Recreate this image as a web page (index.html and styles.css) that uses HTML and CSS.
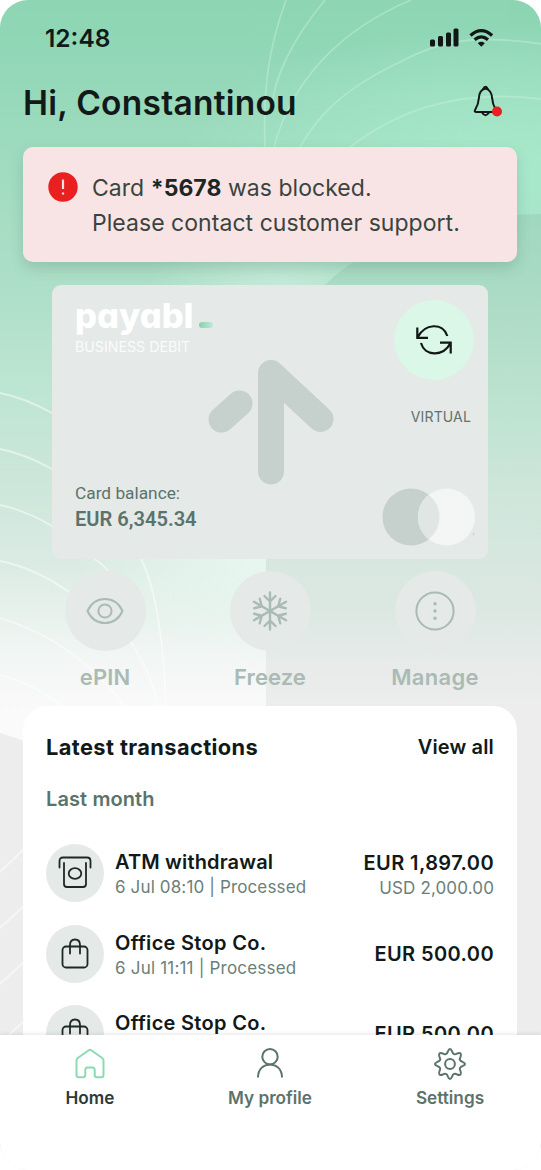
FILE: index.html
```html
<!DOCTYPE html>
<html lang="en">
<head>
<meta charset="utf-8">
<title>payabl. home</title>
<link rel="stylesheet" href="styles.css">
</head>
<body>
<div class="phone">
  <svg class="backdrop" viewBox="0 0 541 1170" preserveAspectRatio="none">
    <defs>
      <linearGradient id="base" x1="0" y1="0" x2="0" y2="1">
        <stop offset="0" stop-color="#8dd5b3"/>
        <stop offset=".04" stop-color="#90d7b6"/>
        <stop offset=".125" stop-color="#9edbbe"/>
        <stop offset=".25" stop-color="#aedfc8"/>
        <stop offset=".33" stop-color="#bde5d3"/>
        <stop offset=".42" stop-color="#cee7db"/>
        <stop offset=".48" stop-color="#daebe3"/>
        <stop offset=".56" stop-color="#f2f6f4"/>
        <stop offset=".61" stop-color="#fafafa"/>
      </linearGradient>
      <linearGradient id="right" gradientUnits="userSpaceOnUse" x1="0" y1="214" x2="0" y2="706">
        <stop offset="0" stop-color="#9fd8be"/>
        <stop offset=".2" stop-color="#aedcc7"/>
        <stop offset=".4" stop-color="#bee3d1"/>
        <stop offset=".55" stop-color="#cde6da"/>
        <stop offset=".7" stop-color="#d7e7df"/>
        <stop offset=".8" stop-color="#dbe8e2"/>
        <stop offset=".92" stop-color="#e8ebea"/>
        <stop offset="1" stop-color="#ecedec"/>
      </linearGradient>
      <radialGradient id="glow" gradientUnits="userSpaceOnUse" cx="0" cy="0" r="1" gradientTransform="translate(500 170) scale(330 145)">
        <stop offset="0" stop-color="#a9eacc" stop-opacity=".95"/>
        <stop offset=".4" stop-color="#a9eacc" stop-opacity=".6"/>
        <stop offset="1" stop-color="#a9eacc" stop-opacity="0"/>
      </radialGradient>
      <radialGradient id="mid" gradientUnits="userSpaceOnUse" cx="0" cy="0" r="1" gradientTransform="translate(266 560) scale(190 100)">
        <stop offset="0" stop-color="#e8f8f0"/>
        <stop offset="1" stop-color="#e8f8f0" stop-opacity="0"/>
      </radialGradient>
      <radialGradient id="halo" gradientUnits="userSpaceOnUse" cx="0" cy="0" r="1" gradientTransform="translate(280 285) scale(130 50)">
        <stop offset="0" stop-color="#c4ead9"/>
        <stop offset="1" stop-color="#c4ead9" stop-opacity="0"/>
      </radialGradient>
    </defs>
    <rect width="541" height="1170" fill="url(#base)"/>
    <rect width="541" height="400" fill="url(#glow)"/>
    <rect y="230" width="541" height="110" fill="url(#halo)"/>
    <rect y="400" width="267" height="260" fill="url(#mid)"/>
    <path d="M541 214C450 216 370 240 325 285C285 330 266 420 266 560V1170H541Z" fill="url(#right)"/>
    <path d="M0 733Q80 755 130 830V1170H0Z" fill="#ededed"/>
    <g class="rings-top">
      <path d="M286 0C268 50 263 90 265 147"/>
      <path d="M325 0C290 42 274 80 272 106"/>
      <path d="M411 0C340 30 292 80 274 147"/>
      <path d="M541 44C470 33 435 43 400 62C345 88 318 115 300 147"/>
      <path d="M541 99C450 88 392 115 350 147"/>
    </g>
    <g class="rings-side">
      <path d="M0 393Q25 398 52 413"/>
      <path d="M0 449Q25 454 52 469"/>
      <path d="M0 505Q25 510 52 526"/>
      <path d="M0 561Q35 568 69 592M124 632Q150 668 158 706"/>
      <path d="M0 618Q75 640 124 706"/>
      <path d="M0 675Q35 684 62 706"/>
      <path d="M94 559Q102 563 108 571M141 559Q162 600 166 706"/>
      <path d="M0 872L24 849M0 928L24 906M0 984L24 962M0 1043L24 1021"/>
    </g>
  </svg>

  <header class="status">
    <span class="clock">12:48</span>
    <svg class="signals" width="66" height="20" viewBox="0 0 66 20">
      <g fill="#111716">
        <rect x="1" y="11.500" width="5" height="7" rx="1.500"/>
        <rect x="9" y="8" width="5" height="10.500" rx="1.500"/>
        <rect x="17" y="4.500" width="5" height="14" rx="1.500"/>
        <rect x="24.500" y="0.500" width="5" height="18" rx="1.500"/>
        <path d="M52.300 18.700L48.800 15.200Q52.300 12.500 55.800 15.200Z"/>
      </g>
      <path d="M41.500 7.500Q52.300 -2.300 63.100 7.500M45.600 11.800Q52.300 5.800 59 11.800" fill="none" stroke="#111716" stroke-width="3.200"/>
    </svg>
  </header>

  <div class="greeting">
    <h1>Hi, Constantinou</h1>
    <svg class="bell" width="32" height="34" viewBox="0 0 32 34">
      <g fill="none" stroke="#111716" stroke-width="2" stroke-linejoin="round">
        <path d="M14.500 3.600C9.200 4.800 8 9 7.800 13.500C7.500 19 6.500 21 4.300 24.500Q2.800 26.800 5 27H24Q26.200 26.800 24.700 24.500C22.500 21 21.500 19 21.200 13.500C21 9 19.700 4.800 14.500 3.600Z"/>
        <path d="M12 4.500Q14.500 -1.200 17 4.500M11 27.500Q14.500 32.800 18 27.500"/>
      </g>
      <circle cx="26" cy="26.500" r="5" fill="#e8201f"/>
    </svg>
  </div>

  <section class="alert">
    <svg width="30" height="30" viewBox="0 0 30 30">
      <circle cx="15" cy="15" r="14.700" fill="#e8201f"/>
      <path d="M15 7.500V17M15 20.500V22.500" stroke="#ece3e3" stroke-width="2.200"/>
    </svg>
    <p>Card <b>*5678</b> was blocked.<br>Please contact customer support.</p>
  </section>

  <section class="card">
    <svg class="arrow" width="128" height="126" viewBox="0 0 128 126">
      <g fill="none" stroke="#c6d1cd" stroke-width="26" stroke-linecap="round" stroke-linejoin="round">
        <path d="M14.500 60.500L32.500 44.500M64 112.500V14L113.500 60"/>
      </g>
    </svg>
    <div class="card-row">
      <div>
        <div class="logo">payabl<i class="dash"></i></div>
        <div class="tier">BUSINESS DEBIT</div>
      </div>
      <div class="flip">
        <svg width="36" height="32" viewBox="0 0 36 32" fill="none" stroke="#111716" stroke-width="2.200">
          <path d="M1.300 3.500V13.800H12M1.500 13.500C9 -1 27 -1.500 31.300 12M34.700 29.500V18.700H24M34.500 19C27 33.500 8.500 32 5 19"/>
        </svg>
      </div>
    </div>
    <div class="virtual">VIRTUAL</div>
    <div class="card-row card-bottom">
      <div class="balance"><span>Card balance:</span><strong>EUR 6,345.34</strong></div>
      <svg class="network" width="94" height="58" viewBox="0 0 94 58">
        <circle cx="29" cy="29" r="28.500" fill="#c6d1cd"/>
        <circle cx="64.500" cy="29" r="28.500" fill="#f4f5f5"/>
        <path d="M46.700 6.700A28.500 28.500 0 0 1 46.700 51.300A28.500 28.500 0 0 1 46.700 6.700Z" fill="#e0e6e3"/>
        <circle cx="91.500" cy="46" r=".9" fill="#c6d1cd"/>
      </svg>
    </div>
  </section>

  <section class="actions">
    <div class="action">
      <div class="disc"><svg width="40" height="40" viewBox="0 0 40 40"><path d="M2.500 20Q8 8 20 8T37.500 20Q32 32 20 32T2.500 20Z"/><circle cx="20" cy="20" r="6.600"/></svg></div>
      <span>ePIN</span>
    </div>
    <div class="action">
      <div class="disc"><svg width="40" height="40" viewBox="0 0 40 40" class="flake">
        <g id="arm"><path d="M20 1.500V38.500M14.500 5L20 10.500L25.500 5M14.500 35L20 29.500L25.500 35"/></g>
        <use href="#arm" transform="rotate(60 20 20)"/><use href="#arm" transform="rotate(120 20 20)"/>
      </svg></div>
      <span>Freeze</span>
    </div>
    <div class="action">
      <div class="disc"><svg width="40" height="40" viewBox="0 0 40 40"><circle cx="20" cy="20" r="18.600"/><g class="dots"><circle cx="20" cy="12.800" r="1.700"/><circle cx="20" cy="20" r="1.700"/><circle cx="20" cy="27.200" r="1.700"/></g></svg></div>
      <span class="wide">Manage</span>
    </div>
  </section>

  <main class="sheet">
    <div class="sheet-head"><h2>Latest transactions</h2><a>View all</a></div>
    <h3>Last month</h3>
    <div class="tx">
      <div class="tx-icon"><svg width="34" height="34" viewBox="0 0 34 34"><path d="M1.500 11.500V5Q1.500 1.500 5 1.500H29Q32.500 1.500 32.500 5V11.500M6 7V28Q6 31 9 31H25Q28 31 28 28V7"/><ellipse cx="17" cy="17.500" rx="6.300" ry="5.300"/></svg></div>
      <div class="tx-info"><b>ATM withdrawal</b><span>6 Jul 08:10 | Processed</span></div>
      <div class="tx-sum"><b>EUR 1,897.00</b><span>USD 2,000.00</span></div>
    </div>
    <div class="tx">
      <div class="tx-icon"><svg width="34" height="34" viewBox="0 0 34 34"><rect x="4.500" y="9.500" width="25" height="21" rx="3.500"/><path d="M12 16.500V8Q12 2.500 17 2.500T22 8V16.500"/></svg></div>
      <div class="tx-info office"><b>Office Stop Co.</b><span>6 Jul 11:11 | Processed</span></div>
      <div class="tx-sum single"><b>EUR 500.00</b></div>
    </div>
    <div class="tx">
      <div class="tx-icon"><svg width="34" height="34" viewBox="0 0 34 34"><rect x="4.500" y="9.500" width="25" height="21" rx="3.500"/><path d="M12 16.500V8Q12 2.500 17 2.500T22 8V16.500"/></svg></div>
      <div class="tx-info office"><b>Office Stop Co.</b></div>
      <div class="tx-sum single"><b>EUR 500.00</b></div>
    </div>
  </main>

  <nav class="tabs">
    <a class="tab active"><svg width="34" height="34" viewBox="0 0 34 34"><path d="M3.500 13.500Q3.500 12 4.800 11L15.700 3.300Q17 2.300 18.300 3.300L29.200 11Q30.500 12 30.500 13.500V28Q30.500 30.300 28.200 30.300H24Q21.700 30.300 21.700 28V23Q21.700 20.500 19.500 20.500H14.500Q12.300 20.500 12.300 23V28Q12.300 30.300 10 30.300H5.800Q3.500 30.300 3.500 28Z"/></svg><span>Home</span></a>
    <a class="tab"><svg width="34" height="34" viewBox="0 0 34 34"><circle cx="17" cy="9.700" r="7.700"/><path d="M5 30.500C5 13 29 13 29 30.500"/></svg><span>My profile</span></a>
    <a class="tab"><svg width="34" height="34" viewBox="0 0 34 34"><circle cx="17" cy="17" r="4.900"/><path d="M14.800 4.600Q17 -.7 19.200 4.600C20 7.300 21.800 7.900 24.100 6.500Q29.300 4.700 27.500 9.900C26.100 12.200 26.700 14 29.400 14.800Q34.700 17 29.400 19.200C26.700 20 26.100 21.800 27.500 24.100Q29.300 29.300 24.100 27.500C21.800 26.100 20 26.700 19.200 29.400Q17 34.700 14.800 29.400C14 26.700 12.200 26.100 9.900 27.500Q4.700 29.300 6.500 24.100C7.900 21.800 7.300 20 4.600 19.200Q-.7 17 4.600 14.800C7.300 14 7.900 12.200 6.500 9.900Q4.700 4.700 9.900 6.500C12.200 7.900 14 7.300 14.800 4.600Z"/></svg><span>Settings</span></a>
  </nav>
</div>
</body>
</html>
```
FILE: styles.css
```css
* { box-sizing: border-box; }
body { margin: 0; background: #fff; font-family: Inter, "Liberation Sans", sans-serif; color: #111a18; }
h1, h2, h3, p { margin: 0; }
.phone {
  position: relative;
  width: 541px;
  height: 1170px;
  display: flex;
  flex-direction: column;
  overflow: hidden;
  border-radius: 28px;
  isolation: isolate;
}
.backdrop { position: absolute; inset: 0; width: 541px; height: 1170px; z-index: -1; }
.rings-top, .rings-side { fill: none; stroke: #c9f3de; stroke-width: 1.8; opacity: .42; }
.rings-side { stroke: #fff; opacity: .5; }

.status { flex: none; height: 75px; padding: 0 46px 0 45px; display: flex; align-items: center; justify-content: space-between; }
.clock { font-size: 24.5px; font-weight: 600; }

.greeting { flex: none; height: 72px; padding: 0 38px 16px 23px; display: flex; align-items: center; justify-content: space-between; }
.greeting h1 { font-size: 33.5px; font-weight: 600; line-height: 40px; letter-spacing: .25px; white-space: nowrap; }
.bell { margin-top: -2px; }

.alert {
  flex: none;
  height: 115px;
  margin: 0 24px 0 23px;
  padding: 24px 25px;
  display: flex;
  gap: 14px;
  background: #f9e4e5;
  border-radius: 10px;
  box-shadow: 0 6px 14px rgba(50, 90, 75, .2);
}
.alert svg { flex: none; margin-top: 1px; }
.alert p { font-size: 23px; line-height: 35px; letter-spacing: .04px; color: #39443f; white-space: nowrap; }
.alert b { font-weight: 700; color: #1b2724; }

.card {
  position: relative;
  flex: none;
  height: 274px;
  margin: 23px 53px 0 52px;
  padding: 15px 14px 13px 23px;
  display: flex;
  flex-direction: column;
  background: #e5e9e7;
  border-radius: 9px;
}
.arrow { position: absolute; left: 155px; top: 74px; }
.card-row { display: flex; justify-content: space-between; }
.logo { height: 32px; line-height: 32px; display: flex; align-items: flex-end; color: #fff; font-size: 34.5px; font-weight: 800; font-feature-settings: "cv11"; }
.dash { width: 14px; height: 6px; margin: 0 0 4px 5px; border-radius: 3px; background: linear-gradient(90deg, #83d2ad, #c4e8d7); }
.tier { margin-top: 6px; font-size: 14.2px; line-height: 18px; color: #fafcfb; }
.flip { width: 80px; height: 80px; border-radius: 50%; background: #daf7e7; display: flex; align-items: center; justify-content: center; }
.virtual { margin: 28px 3px 0 0; text-align: right; font-size: 14px; line-height: 18px; letter-spacing: .15px; color: #61736d; }
.card-bottom { margin-top: auto; align-items: flex-end; }
.network { margin-right: -2px; }
.balance { display: flex; flex-direction: column; margin-bottom: 13px; font-family: Roboto, sans-serif; color: #5b736b; }
.balance span { font-size: 17.3px; line-height: 25px; }
.balance strong { font-size: 20.1px; line-height: 27px; font-weight: 600; }

.actions { flex: none; height: 147px; padding: 12px 23px 0 22.5px; display: grid; grid-template-columns: repeat(3, 165px); color: #a9bbb4; }
.action { display: flex; flex-direction: column; align-items: center; gap: 13px; }
.action span { font-size: 22px; line-height: 26px; font-weight: 600; letter-spacing: .1px; }
.action .wide { letter-spacing: .3px; }
.disc { width: 81px; height: 80px; border-radius: 50%; background: #e5e9e7; display: flex; align-items: center; justify-content: center; }
.disc svg { fill: none; stroke: #a9bbb4; stroke-width: 2; stroke-linecap: round; stroke-linejoin: round; }
.disc .flake { stroke-width: 2.4; }
.disc .dots { fill: #a9bbb4; stroke: none; }

.sheet { flex: 1; min-height: 0; overflow: hidden; margin: 0 24px 0 23px; padding: 28px 23px 0; background: #fff; border-radius: 24px 24px 0 0; }
.sheet-head { display: flex; justify-content: space-between; align-items: center; height: 26px; }
.sheet h2 { font-size: 21.8px; font-weight: 700; letter-spacing: .4px; }
.sheet-head a { font-size: 20px; font-weight: 600; letter-spacing: .15px; }
.sheet h3 { margin-top: 26px; font-size: 20px; line-height: 26px; font-weight: 600; letter-spacing: .1px; color: #5b736b; }
.tx { height: 58px; display: flex; align-items: center; margin-bottom: 22.7px; }
.sheet h3 + .tx { margin-top: 32px; }
.tx-icon { flex: none; width: 58px; height: 58px; border-radius: 50%; background: #e5e9e7; display: flex; align-items: center; justify-content: center; }
.tx-icon svg { fill: none; stroke: #1d2926; stroke-width: 1.8; stroke-linecap: round; }
.tx-info, .tx-sum { display: flex; flex-direction: column; white-space: nowrap; }
.tx-info { margin-left: 11px; align-self: flex-start; padding-top: 5px; }
.tx-sum { margin-left: auto; text-align: right; padding-top: 4px; }
.tx-sum.single { padding-top: 0; }
.tx b { font-size: 20px; line-height: 26px; font-weight: 600; letter-spacing: .15px; }
.tx .office b { letter-spacing: .3px; }
.tx .tx-sum b { letter-spacing: .4px; }
.tx span { font-size: 17px; line-height: 25px; letter-spacing: .14px; color: #6b8079; }
.tx .office span { letter-spacing: .2px; }

.tabs { position: relative; flex: none; height: 135px; background: #fff; display: grid; grid-template-columns: repeat(3, 180px); padding-top: 12px; box-shadow: 0 -1px 4px rgba(40, 60, 50, .12); }
.tab { display: flex; flex-direction: column; align-items: center; gap: 5px; color: #5b736b; }
.tab svg { fill: none; stroke: #5b736b; stroke-width: 2; stroke-linejoin: round; }
.tab span { font-size: 17.2px; line-height: 24px; font-weight: 600; }
.tab.active { color: #2b3b36; }
.tab.active svg { stroke: #8adbb3; }
```
